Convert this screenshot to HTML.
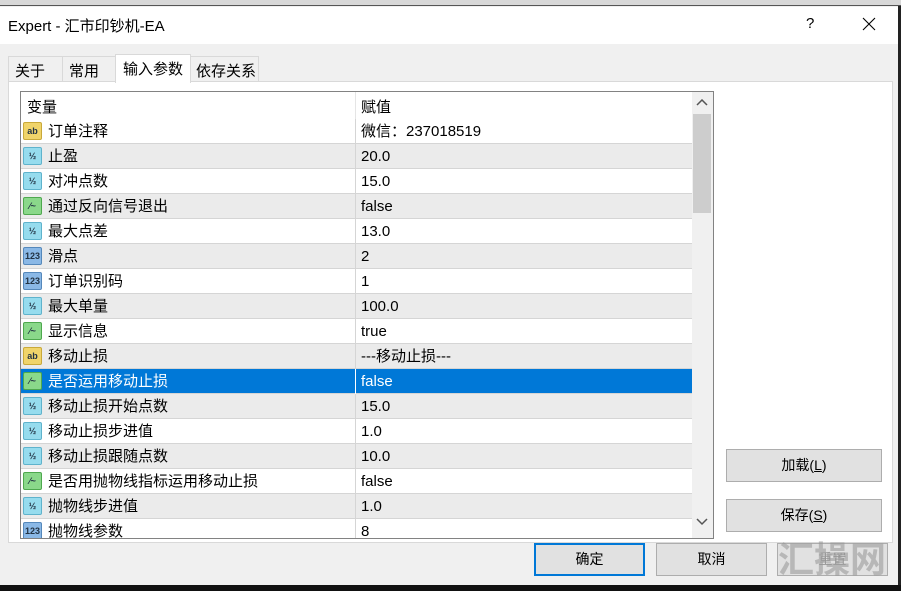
<!DOCTYPE html>
<html><head><meta charset="utf-8"><style>
*{margin:0;padding:0;box-sizing:border-box}
html,body{width:901px;height:591px;overflow:hidden}
body{background:#f0f0f0;font-family:"Liberation Sans","Noto Sans CJK SC",sans-serif;font-size:15px;color:#000;position:relative}
.a{position:absolute}
.row{position:absolute;left:21px;width:671px;height:25px;border-bottom:1px solid #d5d5d5;background:#fff}
.row .n{position:absolute;left:27px;top:0;line-height:25px;height:25px;white-space:nowrap}
.row .v{position:absolute;left:340px;top:0;line-height:25px;height:25px;white-space:nowrap}
.row .sep{position:absolute;left:334px;top:0;width:1px;height:25px;background:#d5d5d5}
.ic{position:absolute;left:2px;top:3px;width:19px;height:18px;border-radius:2px;font-size:9px;font-weight:bold;text-align:center;line-height:16px;color:#234}
.ab{background:#f0d46a;border:1px solid #c9a93a}
.hf{background:#96dcee;border:1px solid #5fb3cc}
.nm{background:#8ab8e6;border:1px solid #5588bb}
.bl{background:#8ad88a;border:1px solid #4ea84e}
.g{background:#ebebeb}
.sel{background:#0078d7;color:#fff}
.btn{position:absolute;background:#e1e1e1;border:1px solid #adadad;text-align:center;line-height:31px;font-size:14px}
</style></head><body>
<div class="a" style="left:0;top:0;width:901px;height:6px;background:#d8d8d8;border-bottom:1px solid #555"></div>
<div class="a" style="left:0;top:7px;width:898px;height:37px;background:#fff"></div>
<div class="a" style="left:898px;top:6px;width:3px;height:585px;background:#222"></div>
<div class="a" style="left:8px;top:15px;font-size:15px">Expert - 汇市印钞机-EA</div>
<div class="a" style="left:806px;top:15px;font-size:15px">?</div>
<svg class="a" style="left:862px;top:17px" width="14" height="14"><path d="M1 1 L13 13 M13 1 L1 13" stroke="#000" stroke-width="1.1"/></svg>

<div class="a" style="left:8px;top:56px;width:55px;height:25px;border:1px solid #d9d9d9;border-bottom:none"></div>
<div class="a" style="left:15px;top:60px">关于</div>
<div class="a" style="left:62px;top:56px;width:54px;height:25px;border:1px solid #d9d9d9;border-bottom:none"></div>
<div class="a" style="left:69px;top:60px">常用</div>
<div class="a" style="left:190px;top:56px;width:69px;height:25px;border:1px solid #d9d9d9;border-bottom:none"></div>
<div class="a" style="left:196px;top:60px">依存关系</div>
<div class="a" style="left:8px;top:81px;width:885px;height:462px;background:#fff;border:1px solid #d9d9d9"></div>
<div class="a" style="left:115px;top:54px;width:76px;height:29px;background:#fff;border:1px solid #d9d9d9;border-bottom:none"></div>
<div class="a" style="left:123px;top:58px">输入参数</div>

<div class="a" style="left:20px;top:91px;width:694px;height:448px;border:1px solid #828282;background:#fff"></div>
<div class="a" style="left:21px;top:92px;width:671px;height:446px;overflow:hidden">
<div style="position:absolute;left:-21px;top:-92px;width:901px;height:600px">
<div class="a" style="left:27px;top:96px">变量</div>
<div class="a" style="left:361px;top:96px">赋值</div>
<div class="a" style="left:355px;top:92px;width:1px;height:27px;background:#e5e5e5"></div>

<div class="row" style="top:119px"><div class="ic ab">ab</div><div class="n">订单注释</div><div class="sep"></div><div class="v">微信：237018519</div></div>
<div class="row g" style="top:144px"><div class="ic hf">½</div><div class="n">止盈</div><div class="sep"></div><div class="v">20.0</div></div>
<div class="row" style="top:169px"><div class="ic hf">½</div><div class="n">对冲点数</div><div class="sep"></div><div class="v">15.0</div></div>
<div class="row g" style="top:194px"><div class="ic bl">⁄~</div><div class="n">通过反向信号退出</div><div class="sep"></div><div class="v">false</div></div>
<div class="row" style="top:219px"><div class="ic hf">½</div><div class="n">最大点差</div><div class="sep"></div><div class="v">13.0</div></div>
<div class="row g" style="top:244px"><div class="ic nm">123</div><div class="n">滑点</div><div class="sep"></div><div class="v">2</div></div>
<div class="row" style="top:269px"><div class="ic nm">123</div><div class="n">订单识别码</div><div class="sep"></div><div class="v">1</div></div>
<div class="row g" style="top:294px"><div class="ic hf">½</div><div class="n">最大单量</div><div class="sep"></div><div class="v">100.0</div></div>
<div class="row" style="top:319px"><div class="ic bl">⁄~</div><div class="n">显示信息</div><div class="sep"></div><div class="v">true</div></div>
<div class="row g" style="top:344px"><div class="ic ab">ab</div><div class="n">移动止损</div><div class="sep"></div><div class="v">---移动止损---</div></div>
<div class="row sel" style="top:369px"><div class="ic bl">⁄~</div><div class="n">是否运用移动止损</div><div class="sep" style="background:#fff"></div><div class="v">false</div></div>
<div class="row g" style="top:394px"><div class="ic hf">½</div><div class="n">移动止损开始点数</div><div class="sep"></div><div class="v">15.0</div></div>
<div class="row" style="top:419px"><div class="ic hf">½</div><div class="n">移动止损步进值</div><div class="sep"></div><div class="v">1.0</div></div>
<div class="row g" style="top:444px"><div class="ic hf">½</div><div class="n">移动止损跟随点数</div><div class="sep"></div><div class="v">10.0</div></div>
<div class="row" style="top:469px"><div class="ic bl">⁄~</div><div class="n">是否用抛物线指标运用移动止损</div><div class="sep"></div><div class="v">false</div></div>
<div class="row g" style="top:494px"><div class="ic hf">½</div><div class="n">抛物线步进值</div><div class="sep"></div><div class="v">1.0</div></div>
<div class="row" style="top:519px"><div class="ic nm">123</div><div class="n">抛物线参数</div><div class="sep"></div><div class="v">8</div></div>
</div></div>

<div class="a" style="left:692px;top:92px;width:21px;height:446px;background:#f0f0f0"></div>
<div class="a" style="left:693px;top:114px;width:18px;height:99px;background:#cdcdcd"></div>
<svg class="a" style="left:696px;top:99px" width="12" height="8"><path d="M1 6 L6 1 L11 6" stroke="#555" stroke-width="1.5" fill="none"/></svg>
<svg class="a" style="left:696px;top:518px" width="12" height="8"><path d="M1 1 L6 6 L11 1" stroke="#555" stroke-width="1.5" fill="none"/></svg>

<div class="btn" style="left:726px;top:449px;width:156px;height:33px">加载(<u>L</u>)</div>
<div class="btn" style="left:726px;top:499px;width:156px;height:33px">保存(<u>S</u>)</div>
<div class="btn" style="left:534px;top:543px;width:111px;height:33px;border:2px solid #0078d7;line-height:29px">确定</div>
<div class="btn" style="left:656px;top:543px;width:111px;height:33px">取消</div>
<div class="btn" style="left:777px;top:543px;width:111px;height:33px;color:#999">重置</div>
<div class="a" style="left:778px;top:540px;font-size:36px;font-weight:bold;color:rgba(150,150,150,.55);white-space:nowrap;line-height:40px">汇操网</div>
<div class="a" style="left:0;top:585px;width:901px;height:6px;background:#111"></div>
</body></html>
